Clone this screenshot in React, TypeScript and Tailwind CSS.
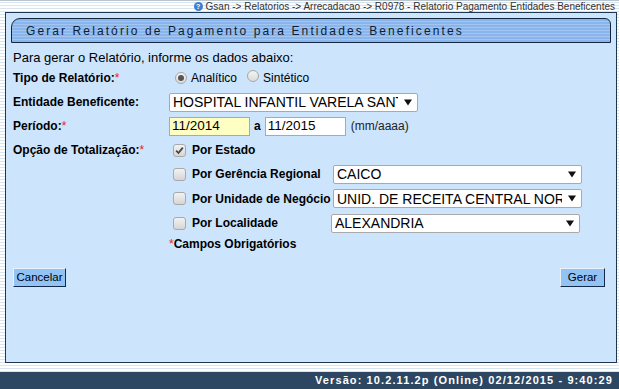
import React from "react";

const Radio = ({ checked }: { checked?: boolean }) => (
  <span className="inline-flex items-center justify-center w-[12px] h-[12px] rounded-full border border-[#a6a6a6] bg-[linear-gradient(#f4f4f4,#dcdcdc)] shrink-0">
    {checked && <span className="w-[6px] h-[6px] rounded-full bg-[#555]" />}
  </span>
);

const Check = ({ checked }: { checked?: boolean }) => (
  <span className="inline-flex items-center justify-center w-[13px] h-[13px] rounded-[3px] border border-[#a9a9a9] bg-[linear-gradient(#f2f2f2,#d6d6d6)] shrink-0">
    {checked && (
      <svg width="9" height="9" viewBox="0 0 9 9">
        <path d="M1.2 4.6 L3.5 7 L7.8 1.6" stroke="#444" strokeWidth="1.8" fill="none" />
      </svg>
    )}
  </span>
);

const Select = ({ value, className = "" }: { value: string; className?: string }) => (
  <div
    className={`flex items-center w-[249px] h-[19px] bg-white border border-[#a9a9a9] rounded-[2px] pl-[3px] pr-[5px] text-[14px] text-black ${className}`}
  >
    <span className="flex-1 overflow-hidden whitespace-nowrap leading-none">{value}</span>
    <svg width="8" height="7" viewBox="0 0 8 7" className="ml-[6px] shrink-0">
      <path d="M0 0.5 H8 L4 6.5 Z" fill="#111" />
    </svg>
  </div>
);

const Star = () => <span className="text-[#e8231f] font-normal">*</span>;

const Btn = ({ children, className = "" }: { children: React.ReactNode; className?: string }) => (
  <button
    className={`h-[19px] bg-[#93c3f4] text-[11.5px] text-black leading-none border border-t-[#e8f2fc] border-l-[#e8f2fc] border-b-[#13294a] border-r-[#13294a] ${className}`}
  >
    {children}
  </button>
);

export default function App() {
  const stripes =
    "bg-[repeating-linear-gradient(to_bottom,#ffffff_0px,#ffffff_2px,#d7e5f1_2px,#d7e5f1_3px)]";
  return (
    <div
      className={`w-[619px] h-[389px] overflow-hidden flex flex-col ${stripes}`}
      style={{ fontFamily: '"Liberation Sans", Arial, sans-serif' }}
    >
      {/* breadcrumb */}
      <div className="h-[12px] flex items-center justify-end pr-[4px] text-[10px] leading-none text-[#333] border-t border-[#b9c4cc]">
        <span className="inline-flex items-center justify-center w-[9px] h-[9px] rounded-full bg-[#3b7fd0] text-white text-[7px] font-bold mr-[3px]">
          ?
        </span>
        <span>Gsan -&gt; Relatorios -&gt; Arrecadacao -&gt; R0978 - Relatorio Pagamento Entidades Beneficentes</span>
      </div>

      {/* main panel */}
      <div className="ml-[5px] mr-[2px] h-[351px] border border-[#1f3650] bg-[#cce4fc] flex flex-col">
        <div className="mt-[5px] mx-[5px] h-[25px] border border-[#14263d] rounded-tl-[9px] rounded-tr-[6px] bg-[repeating-linear-gradient(to_bottom,#8ab5ec_0px,#8ab5ec_2px,#a3c6f1_2px,#a3c6f1_3px)] flex items-center pl-[14px]">
          <span className="text-[12px] tracking-[2.1px] text-[#0d1d33] leading-none">
            Gerar Relatório de Pagamento para Entidades Beneficentes
          </span>
        </div>

        <div className="pl-[7px] pr-[7px] mt-[6px] flex flex-col text-[12px] text-black">
          <div className="h-[17px] flex items-center text-[13px]">Para gerar o Relatório, informe os dados abaixo:</div>

          <div className="h-[24px] flex items-center">
            <div className="w-[156px] font-bold">
              Tipo de Relatório:<Star />
            </div>
            <div className="flex items-center ml-[6px]">
              <Radio checked />
              <span className="ml-[4px]">Analítico</span>
              <span className="ml-[10px]">
                <Radio />
              </span>
              <span className="ml-[4px]">Sintético</span>
            </div>
          </div>

          <div className="h-[24px] flex items-center">
            <div className="w-[156px] font-bold">Entidade Beneficente:</div>
            <Select value="HOSPITAL INFANTIL VARELA SANTIAGO" />
          </div>

          <div className="h-[24px] flex items-center">
            <div className="w-[156px] font-bold">
              Período:<Star />
            </div>
            <div className="w-[81px] h-[19px] bg-[#ffffc4] border border-[#a9a9a9] flex items-center pl-[2px] text-[13.5px]">
              11/2014
            </div>
            <span className="font-bold ml-[4px] mr-[4px]">a</span>
            <div className="w-[81px] h-[19px] bg-white border border-[#a9a9a9] flex items-center pl-[2px] text-[13.5px]">
              11/2015
            </div>
            <span className="ml-[5px] text-[#222]">(mm/aaaa)</span>
          </div>

          <div className="h-[24px] flex items-center">
            <div className="w-[156px] font-bold">
              Opção de Totalização:<Star />
            </div>
            <div className="flex items-center ml-[4px]">
              <Check checked />
              <span className="ml-[6px] font-bold">Por Estado</span>
            </div>
          </div>

          <div className="h-[24px] flex items-center">
            <div className="w-[156px]" />
            <div className="w-[164px] flex items-center pl-[4px]">
              <Check />
              <span className="ml-[6px] font-bold">Por Gerência Regional</span>
            </div>
            <Select value="CAICO" />
          </div>

          <div className="h-[25px] flex items-center">
            <div className="w-[156px]" />
            <div className="w-[164px] flex items-center pl-[4px]">
              <Check />
              <span className="ml-[6px] font-bold whitespace-nowrap">Por Unidade de Negócio</span>
            </div>
            <Select value="UNID. DE RECEITA CENTRAL NORTE" />
          </div>

          <div className="h-[24px] flex items-center">
            <div className="w-[156px]" />
            <div className="w-[162px] flex items-center pl-[4px]">
              <Check />
              <span className="ml-[6px] font-bold">Por Localidade</span>
            </div>
            <Select value="ALEXANDRIA" />
          </div>

          <div className="h-[17px] flex items-center">
            <div className="w-[156px]" />
            <span className="font-bold">
              <Star />
              Campos Obrigatórios
            </span>
          </div>

          <div className="mt-[16px] flex items-center justify-between pr-[4px]">
            <Btn className="w-[53px]">Cancelar</Btn>
            <Btn className="w-[45px]">Gerar</Btn>
          </div>
        </div>
      </div>

      <div className="flex-1" />

      {/* footer */}
      <div className="h-[17px] bg-[#2d4661] flex items-center justify-end pr-[6px]">
        <span className="text-white font-bold text-[11px] tracking-[1.1px] leading-none">
          Versão: 10.2.11.2p (Online) 02/12/2015 - 9:40:29
        </span>
      </div>
    </div>
  );
}
